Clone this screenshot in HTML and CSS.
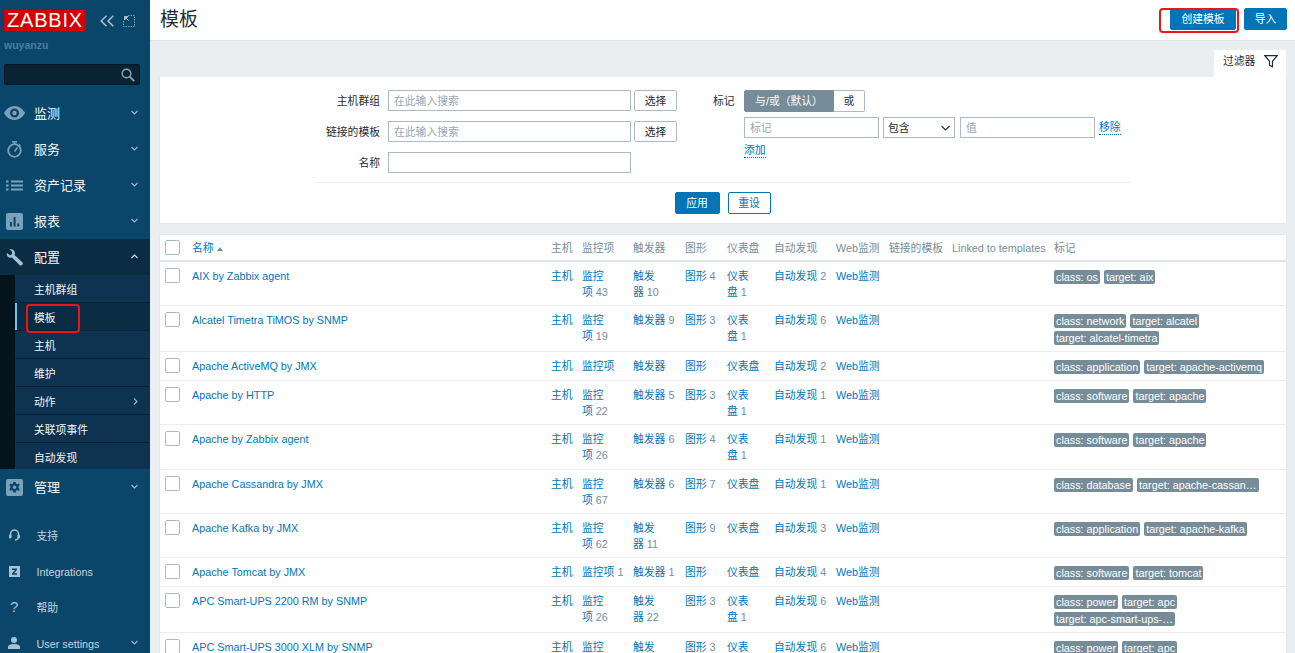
FILE: index.html
```html
<!DOCTYPE html>
<html lang="zh">
<head>
<meta charset="utf-8">
<title>模板</title>
<link rel="stylesheet" href="styles.css">
</head>
<body>
<div class="app">
<aside class="side">
  <div class="brand">
    <span class="logo">ZABBIX</span>
    <svg class="tool" width="14" height="12" viewBox="0 0 14 12"><path d="M6.500 .7 1.200 6 6.500 11.300M13.300 .7 8 6 13.300 11.300" fill="none" stroke="#a9c2d3" stroke-width="1.500"/></svg>
    <svg class="tool kiosk" width="12" height="12" viewBox="0 0 12 12"><path d="M5 .5H11.500V11.500H.5V5" fill="none" stroke="#7499b3" stroke-dasharray="1.500 1"/><path d="M2 2 5.500 5.500M1.500 1.500H5L1.500 5Z" fill="#a9c2d3" stroke="#a9c2d3"/></svg>
  </div>
  <div class="user">wuyanzu</div>
  <div class="search">
    <svg width="14" height="14" viewBox="0 0 14 14"><circle cx="5.500" cy="5.500" r="4.300" fill="none" stroke="#8aa9bd" stroke-width="1.400"/><path d="M8.700 8.700 13.200 13.200" stroke="#8aa9bd" stroke-width="1.800"/></svg>
  </div>
  <nav class="menu">
    <a class="mi"><span class="ic"><svg width="21" height="14" viewBox="0 0 21 14"><path fill-rule="evenodd" d="M10.500 0C16 0 19.500 4 21 7c-1.500 3-5 7-10.500 7S1.500 10 0 7C1.500 4 5 0 10.500 0Zm0 2.500a4.500 4.500 0 1 0 0 9 4.500 4.500 0 0 0 0-9Zm0 2.300a2.200 2.200 0 1 1 0 4.400 2.200 2.200 0 0 1 0-4.400Z" fill="#7ba2bb"/></svg></span><span>监测</span><svg class="chev" width="7" height="5" viewBox="0 0 7 5"><path d="M.5 1 3.500 4 6.500 1" fill="none" stroke="#9fb9ca" stroke-width="1.100"/></svg></a>
    <a class="mi"><span class="ic"><svg width="15" height="17" viewBox="0 0 15 17"><circle cx="7.500" cy="9.500" r="6.300" fill="none" stroke="#7ba2bb" stroke-width="1.800"/><path d="M5 .8H10M7.500 1V3M12 3.500 13.500 5M7.500 10.500 10.500 6.500" stroke="#7ba2bb" stroke-width="1.600" fill="none"/></svg></span><span>服务</span><svg class="chev" width="7" height="5" viewBox="0 0 7 5"><path d="M.5 1 3.500 4 6.500 1" fill="none" stroke="#9fb9ca" stroke-width="1.100"/></svg></a>
    <a class="mi"><span class="ic"><svg width="17" height="11" viewBox="0 0 17 11"><path d="M0 1.500H2.500M5 1.500H17M0 5.500H2.500M5 5.500H17M0 9.500H2.500M5 9.500H17" stroke="#7ba2bb" stroke-width="1.800"/></svg></span><span>资产记录</span><svg class="chev" width="7" height="5" viewBox="0 0 7 5"><path d="M.5 1 3.500 4 6.500 1" fill="none" stroke="#9fb9ca" stroke-width="1.100"/></svg></a>
    <a class="mi"><span class="ic"><svg width="17" height="17" viewBox="0 0 17 17"><path fill-rule="evenodd" d="M2 0H15a2 2 0 0 1 2 2V15a2 2 0 0 1-2 2H2a2 2 0 0 1-2-2V2a2 2 0 0 1 2-2ZM4 9V13.500H6V9ZM7.600 4V13.500H9.600V4ZM11.200 10.500V13.500H13.200V10.500Z" fill="#7ba2bb"/></svg></span><span>报表</span><svg class="chev" width="7" height="5" viewBox="0 0 7 5"><path d="M.5 1 3.500 4 6.500 1" fill="none" stroke="#9fb9ca" stroke-width="1.100"/></svg></a>
    <a class="mi open"><span class="ic"><svg width="17" height="17" viewBox="0 0 17 17"><path d="M1 4 4 6.500 6.200 5 6 2.500 3.500.5C6 -.3 8.500 1 8.800 3.500 9 4.500 8.800 5.200 8.500 6L16.500 13.500C17.200 14.500 16.800 15.800 15.800 16.300 15 16.800 14 16.600 13.500 16L6 8.500C4.500 9 3 8.800 1.800 7.700.8 6.700.5 5.300 1 4Z" fill="#a9c2d3"/></svg></span><span>配置</span><svg class="chev" width="7" height="5" viewBox="0 0 7 5"><path d="M.5 4 3.500 1 6.500 4" fill="none" stroke="#d3e0e8" stroke-width="1.100"/></svg></a>
    <div class="sub">
      <a class="si">主机群组</a>
      <a class="si cur">模板</a>
      <a class="si">主机</a>
      <a class="si">维护</a>
      <a class="si">动作<svg class="chev" width="5" height="7" viewBox="0 0 5 7"><path d="M1 .5 4 3.500 1 6.500" fill="none" stroke="#9fb9ca" stroke-width="1.100"/></svg></a>
      <a class="si">关联项事件</a>
      <a class="si">自动发现</a>
    </div>
    <a class="mi"><span class="ic"><svg width="17" height="17" viewBox="0 0 17 17"><path fill-rule="evenodd" d="M2 0H15a2 2 0 0 1 2 2V15a2 2 0 0 1-2 2H2a2 2 0 0 1-2-2V2a2 2 0 0 1 2-2ZM7.200 3 7 4.700 5.700 5.300 4.300 4.400 3.200 6 4.400 7.200V9L3.200 10.200 4.300 12 5.700 11 7 11.700 7.200 13.500H9.800L10 11.700 11.300 11 12.700 12 13.800 10.200 12.600 9V7.200L13.800 6 12.700 4.400 11.300 5.300 10 4.700 9.800 3ZM8.500 6.500a1.800 1.800 0 1 1 0 3.600 1.800 1.800 0 0 1 0-3.600Z" fill="#7ba2bb"/></svg></span><span>管理</span><svg class="chev" width="7" height="5" viewBox="0 0 7 5"><path d="M.5 1 3.500 4 6.500 1" fill="none" stroke="#9fb9ca" stroke-width="1.100"/></svg></a>
  </nav>
  <div class="foot">
    <a class="fi"><span class="fic"><svg width="11" height="13" viewBox="0 0 11 13"><path d="M1.500 7.500V5a4 4 0 0 1 8 0V7.500C9.500 9.500 8 10.800 6 11" fill="none" stroke="#a9c2d3" stroke-width="1.500"/><rect x="0" y="5.500" width="2.500" height="4" rx="1" fill="#a9c2d3"/><rect x="8.500" y="5.500" width="2.500" height="4" rx="1" fill="#a9c2d3"/></svg></span>支持</a>
    <a class="fi"><span class="fic"><svg width="11" height="11" viewBox="0 0 11 11"><path fill-rule="evenodd" d="M0 0H11V11H0ZM3 2.500V4H6L3 7.500V8.800H8V7.200H5.200L8 3.700V2.500Z" fill="#a9c2d3"/></svg></span>Integrations</a>
    <a class="fi"><span class="fic q">?</span>帮助</a>
    <a class="fi"><span class="fic"><svg width="12" height="12" viewBox="0 0 12 12"><circle cx="6" cy="3" r="3" fill="#a9c2d3"/><path d="M0 12V10C0 8 3 7 6 7S12 8 12 10V12Z" fill="#a9c2d3"/></svg></span>User settings<svg class="chev" width="7" height="5" viewBox="0 0 7 5"><path d="M.5 1 3.500 4 6.500 1" fill="none" stroke="#9fb9ca" stroke-width="1.100"/></svg></a>
  </div>
</aside>
<main class="main">
  <header class="head">
    <h1>模板</h1>
    <div class="actions"><button class="btn create">创建模板</button><button class="btn import">导入</button></div>
    <i class="mark mark-create"></i>
  </header>
  <div class="content">
    <div class="tabrow"><div class="tab">过滤器<svg width="14" height="13" viewBox="0 0 14 13"><path d="M.8.7H13.200L8.500 6.200V11.800L5.500 10.200V6.200Z" fill="none" stroke="#1f2c33" stroke-width="1.200"/></svg></div></div>
    <section class="filter">
      <div class="fcols">
        <div class="fleft">
          <div class="frow"><label>主机群组</label><input class="inp wide" placeholder="在此输入搜索"><button class="pick">选择</button></div>
          <div class="frow"><label>链接的模板</label><input class="inp wide" placeholder="在此输入搜索"><button class="pick">选择</button></div>
          <div class="frow"><label>名称</label><input class="inp wide"></div>
        </div>
        <div class="fright">
          <div class="tagtop"><label>标记</label><div class="seg"><span class="on">与/或（默认）</span><span>或</span></div></div>
          <div class="tagrow">
            <input class="inp tagin" placeholder="标记">
            <div class="sel">包含<svg width="9" height="6" viewBox="0 0 9 6"><path d="M.5 1 4.500 5 8.500 1" fill="none" stroke="#1f2c33" stroke-width="1.100"/></svg></div>
            <input class="inp tagin" placeholder="值">
            <a class="dot">移除</a>
          </div>
          <a class="dot add">添加</a>
        </div>
      </div>
      <div class="fbtns"><button class="btn apply">应用</button><button class="ghost">重设</button></div>
    </section>
    <section class="list">
      <table>
        <colgroup><col class="c0"><col class="c1"><col class="c2"><col class="c3"><col class="c4"><col class="c5"><col class="c6"><col class="c7"><col class="c8"><col class="c9"><col class="c10"><col></colgroup>
        <thead><tr><th><i class="cb"></i></th><th class="sort">名称<i class="arrow"></i></th><th>主机</th><th>监控项</th><th>触发器</th><th>图形</th><th>仪表盘</th><th>自动发现</th><th>Web监测</th><th>链接的模板</th><th>Linked to templates</th><th>标记</th></tr></thead>
        <tbody>
          <tr><td><i class="cb"></i></td><td><a>AIX by Zabbix agent</a></td><td><a>主机</a></td><td><a>监控项</a><s>&nbsp;43</s></td><td><a>触发器</a><s>&nbsp;10</s></td><td><a>图形</a><s>&nbsp;4</s></td><td><a>仪表盘</a><s>&nbsp;1</s></td><td><a>自动发现</a><s>&nbsp;2</s></td><td><a>Web监测</a></td><td></td><td></td><td><b>class: os</b><b>target: aix</b></td></tr>
          <tr><td><i class="cb"></i></td><td><a>Alcatel Timetra TiMOS by SNMP</a></td><td><a>主机</a></td><td><a>监控项</a><s>&nbsp;19</s></td><td><a>触发器</a><s>&nbsp;9</s></td><td><a>图形</a><s>&nbsp;3</s></td><td><a>仪表盘</a><s>&nbsp;1</s></td><td><a>自动发现</a><s>&nbsp;6</s></td><td><a>Web监测</a></td><td></td><td></td><td><b>class: network</b><b>target: alcatel</b><b>target: alcatel-timetra</b></td></tr>
          <tr><td><i class="cb"></i></td><td><a>Apache ActiveMQ by JMX</a></td><td><a>主机</a></td><td><a>监控项</a></td><td><a>触发器</a></td><td><a>图形</a></td><td><a>仪表盘</a></td><td><a>自动发现</a><s>&nbsp;2</s></td><td><a>Web监测</a></td><td></td><td></td><td><b>class: application</b><b>target: apache-activemq</b></td></tr>
          <tr><td><i class="cb"></i></td><td><a>Apache by HTTP</a></td><td><a>主机</a></td><td><a>监控项</a><s>&nbsp;22</s></td><td><a>触发器</a><s>&nbsp;5</s></td><td><a>图形</a><s>&nbsp;3</s></td><td><a>仪表盘</a><s>&nbsp;1</s></td><td><a>自动发现</a><s>&nbsp;1</s></td><td><a>Web监测</a></td><td></td><td></td><td><b>class: software</b><b>target: apache</b></td></tr>
          <tr class="tall"><td><i class="cb"></i></td><td><a>Apache by Zabbix agent</a></td><td><a>主机</a></td><td><a>监控项</a><s>&nbsp;26</s></td><td><a>触发器</a><s>&nbsp;6</s></td><td><a>图形</a><s>&nbsp;4</s></td><td><a>仪表盘</a><s>&nbsp;1</s></td><td><a>自动发现</a><s>&nbsp;1</s></td><td><a>Web监测</a></td><td></td><td></td><td><b>class: software</b><b>target: apache</b></td></tr>
          <tr><td><i class="cb"></i></td><td><a>Apache Cassandra by JMX</a></td><td><a>主机</a></td><td><a>监控项</a><s>&nbsp;67</s></td><td><a>触发器</a><s>&nbsp;6</s></td><td><a>图形</a><s>&nbsp;7</s></td><td><a>仪表盘</a></td><td><a>自动发现</a><s>&nbsp;1</s></td><td><a>Web监测</a></td><td></td><td></td><td><b>class: database</b><b>target: apache-cassan…</b></td></tr>
          <tr><td><i class="cb"></i></td><td><a>Apache Kafka by JMX</a></td><td><a>主机</a></td><td><a>监控项</a><s>&nbsp;62</s></td><td><a>触发器</a><s>&nbsp;11</s></td><td><a>图形</a><s>&nbsp;9</s></td><td><a>仪表盘</a></td><td><a>自动发现</a><s>&nbsp;3</s></td><td><a>Web监测</a></td><td></td><td></td><td><b>class: application</b><b>target: apache-kafka</b></td></tr>
          <tr><td><i class="cb"></i></td><td><a>Apache Tomcat by JMX</a></td><td><a>主机</a></td><td><a>监控项</a><s>&nbsp;1</s></td><td><a>触发器</a><s>&nbsp;1</s></td><td><a>图形</a></td><td><a>仪表盘</a></td><td><a>自动发现</a><s>&nbsp;4</s></td><td><a>Web监测</a></td><td></td><td></td><td><b>class: software</b><b>target: tomcat</b></td></tr>
          <tr><td><i class="cb"></i></td><td><a>APC Smart-UPS 2200 RM by SNMP</a></td><td><a>主机</a></td><td><a>监控项</a><s>&nbsp;26</s></td><td><a>触发器</a><s>&nbsp;22</s></td><td><a>图形</a><s>&nbsp;3</s></td><td><a>仪表盘</a><s>&nbsp;1</s></td><td><a>自动发现</a><s>&nbsp;6</s></td><td><a>Web监测</a></td><td></td><td></td><td><b>class: power</b><b>target: apc</b><b>target: apc-smart-ups-…</b></td></tr>
          <tr><td><i class="cb"></i></td><td><a>APC Smart-UPS 3000 XLM by SNMP</a></td><td><a>主机</a></td><td><a>监控项</a><s>&nbsp;26</s></td><td><a>触发器</a><s>&nbsp;22</s></td><td><a>图形</a><s>&nbsp;3</s></td><td><a>仪表盘</a><s>&nbsp;1</s></td><td><a>自动发现</a><s>&nbsp;6</s></td><td><a>Web监测</a></td><td></td><td></td><td><b>class: power</b><b>target: apc</b><b>target: apc-smart-ups-…</b></td></tr>
        </tbody>
      </table>
    </section>
  </div>
</main>
</div>
</body>
</html>
```
FILE: styles.css
```css
* { box-sizing: border-box; }
html, body { margin: 0; height: 653px; overflow: hidden; }
body { font: 10.8px/16px "Liberation Sans", "Noto Sans CJK SC", sans-serif; color: #1f2c33; background: #ebeef0; }
a { color: #0275b8; text-decoration: none; }
button { font: inherit; cursor: pointer; }
.app { display: flex; height: 653px; }

.side { width: 150px; flex: none; background: #0a466a; position: relative; height: 653px; overflow: hidden; }
.brand { display: flex; align-items: center; padding: 10px 0 0 4px; height: 31px; }
.logo { width: 82px; height: 21px; background: #d40000; color: #fff; font-size: 20px; line-height: 21px; text-align: center; letter-spacing: .8px; }
.tool { margin-left: 14px; }
.kiosk { margin-left: 9px; }
.user { color: #4c7e9e; font-weight: bold; font-size: 10.5px; line-height: 14px; padding: 7px 0 0 4px; }
.search { margin: 12px 10px 0 4px; height: 21px; background: #0a2332; border: 1px solid #051722; border-radius: 2px; display: flex; justify-content: flex-end; align-items: center; padding-right: 4px; }
.menu { margin-top: 10px; }
.mi { display: flex; align-items: center; height: 36px; padding-top: 2px; color: #f2f6f9; font-size: 13px; position: relative; }
.mi.open { background: #0a2d43; }
.ic { width: 34px; flex: none; display: flex; justify-content: center; padding-right: 6px; margin-bottom: 2px; }
.chev { position: absolute; right: 12px; top: 50%; margin-top: -3px; }
.sub { border-left: 15px solid #04131c; background: #0d3350; }
.si { display: flex; align-items: center; height: 28px; padding: 2px 0 0 19px; color: #f2f6f9; border-bottom: 1px solid #0a2235; position: relative; }
.si:last-child { border-bottom: 0; height: 26px; padding-top: 4px; }
.si.cur { background: #0a2d43; box-shadow: inset 2px 0 0 #74c0f0; }
.si.cur::after { content: ""; position: absolute; left: 11px; top: 1px; width: 50px; height: 25px; border: 2px solid #f01414; border-radius: 4px; }
.foot { margin-top: 12px; }
.fi { display: flex; align-items: center; height: 36px; padding-top: 2px; color: #c6d5df; position: relative; }
.fic { width: 36.5px; padding-right: 8px; flex: none; display: flex; justify-content: center; color: #a9c2d3; margin-bottom: 2px; }
.q { font-size: 15px; }

.main { flex: 1; min-width: 0; }
.head { height: 41px; background: #fff; border-bottom: 1px solid #dfe4e7; display: flex; align-items: flex-start; justify-content: space-between; padding: 8px 8px 0 10px; position: relative; }
h1 { margin: 0; font-size: 18.9px; line-height: 24px; font-weight: normal; }
.actions { display: flex; gap: 8px; }
.btn { height: 22px; padding: 0; border: 1px solid #0275b8; border-radius: 2px; background: #0275b8; color: #fff; }
.create { width: 66px; }
.import { width: 43px; }
.mark { position: absolute; border: 2px solid #f01414; border-radius: 4px; }
.mark-create { left: 1009px; top: 8px; width: 80px; height: 25px; }
.content { padding: 9px 8px 0 9px; }
.tabrow { display: flex; justify-content: flex-end; margin-right: 1px; }
.tab { width: 72px; height: 27px; background: #fff; display: flex; align-items: center; gap: 9px; padding: 0 0 5px 9px; }
.filter { background: #fff; height: 147px; border: 1px solid #e4e8ea; border-top: 0; padding-top: 13px; }
.fcols { display: flex; height: 93px; margin: 0 156px; border-bottom: 1px solid #ebeef0; }
.fleft { width: 397px; display: flex; flex-direction: column; gap: 10px; }
.frow { display: flex; align-items: center; height: 21px; }
.frow label { width: 64px; text-align: right; margin-right: 8px; }
.inp { height: 21px; border: 1px solid #acbbc2; background: #fff; padding: 0 5px; font: inherit; color: #1f2c33; outline: 0; border-radius: 0; }
.inp::placeholder { color: #9aa7ae; }
.wide { width: 243px; }
.pick { width: 43px; height: 21px; margin-left: 3px; background: #fff; border: 1px solid #acbbc2; border-radius: 2px; color: #1f2c33; padding: 0; }
.tagtop { display: flex; align-items: center; height: 22px; }
.tagtop label { width: 31px; padding-right: 9px; white-space: nowrap; }
.seg { display: flex; height: 22px; }
.seg span { display: flex; align-items: center; justify-content: center; width: 31px; border: 1px solid #acbbc2; border-left: 0; border-radius: 0 2px 2px 0; }
.seg .on { width: 90px; background: #768d99; border: 1px solid #768d99; color: #fff; border-radius: 2px 0 0 2px; }
.tagrow { display: flex; align-items: center; height: 21px; margin: 5px 0 0 31px; }
.tagin { width: 135px; }
.sel { width: 72px; height: 21px; margin: 0 5px 0 4px; border: 1px solid #acbbc2; display: flex; align-items: center; justify-content: space-between; padding: 0 4px; }
.dot { border-bottom: 1px dotted #0275b8; line-height: 13px; margin-left: 4px; }
.add { display: inline-block; margin: 6px 0 0 31px; }
.fbtns { display: flex; justify-content: center; gap: 8px; margin-top: 9px; padding-right: 1px; }
.apply { width: 45px; }
.ghost { width: 43px; height: 22px; background: #fff; border: 1px solid #0275b8; border-radius: 2px; color: #0275b8; padding: 0; }

.list { margin-top: 10px; background: #fff; border: 1px solid #e4e8ea; height: 420px; overflow: hidden; }
table { border-collapse: collapse; table-layout: fixed; width: 100%; }
.c0 { width: 27px; } .c1 { width: 359px; } .c2 { width: 31px; } .c3 { width: 51px; } .c4 { width: 52px; }
.c5 { width: 42px; } .c6 { width: 47px; } .c7 { width: 62px; } .c8 { width: 53px; } .c9 { width: 63px; } .c10 { width: 102px; }
th { font-weight: normal; text-align: left; color: #768d99; padding: 5px 1px 4px 5px; height: 25px; border-bottom: 2px solid #dfe4e7; white-space: nowrap; overflow: hidden; }
th .cb { margin-top: -1px; }
td { padding: 6px 1px 5px 5px; vertical-align: top; border-bottom: 1px solid #ebeef0; }
.tall td { padding-bottom: 6px; }
th.sort { color: #0275b8; }
.cb { display: block; width: 15px; height: 15px; border: 1px solid #acbbc2; border-radius: 2px; background: #fff; }
.arrow { display: inline-block; margin-left: 3px; border: 3px solid transparent; border-bottom: 4px solid #768d99; border-top: 0; vertical-align: 1px; }
s { text-decoration: none; color: #768d99; }
b { display: inline-block; font-weight: normal; color: #fff; background: #768d99; border-radius: 2px; padding: 0 2px; line-height: 14px; margin: 2px 4px 1px 0; white-space: nowrap; }
```
